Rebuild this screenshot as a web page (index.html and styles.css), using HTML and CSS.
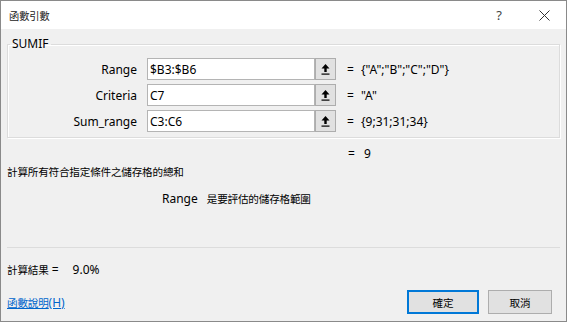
FILE: index.html
```html
<!DOCTYPE html>
<html lang="zh-Hant">
<head>
  <meta charset="UTF-8" />
  <title>函數引數</title>
  <link rel="stylesheet" href="styles.css">
</head>
<body>
  <div class="window">
    <div class="titlebar">
      <span class="title">函數引數</span>
      <span class="help">?</span>
      <svg class="close" width="11" height="11" viewBox="0 0 11 11">
        <path d="M0.5 0.5 L10.5 10.5 M10.5 0.5 L0.5 10.5" stroke="#333" stroke-width="1" fill="none"/>
      </svg>
    </div>

    <div class="content">
      <fieldset class="group">
        <legend>SUMIF</legend>
        <div class="args">
          <label>Range</label>
          <div class="field"><input type="text" value="$B3:$B6"><button class="pick"><svg width="9" height="11" viewBox="0 0 9 11"><path d="M4.5 0 L0.5 4.5 L3.3 4.5 L3.3 8 L5.7 8 L5.7 4.5 L8.5 4.5 Z" fill="#000"/><rect x="0.5" y="9.5" width="8" height="1.2" fill="#000"/></svg></button></div>
          <span class="eq">=</span>
          <span class="val">{"A";"B";"C";"D"}</span>

          <label>Criteria</label>
          <div class="field"><input type="text" value="C7"><button class="pick"><svg width="9" height="11" viewBox="0 0 9 11"><path d="M4.5 0 L0.5 4.5 L3.3 4.5 L3.3 8 L5.7 8 L5.7 4.5 L8.5 4.5 Z" fill="#000"/><rect x="0.5" y="9.5" width="8" height="1.2" fill="#000"/></svg></button></div>
          <span class="eq">=</span>
          <span class="val">"A"</span>

          <label>Sum_range</label>
          <div class="field"><input type="text" value="C3:C6"><button class="pick"><svg width="9" height="11" viewBox="0 0 9 11"><path d="M4.5 0 L0.5 4.5 L3.3 4.5 L3.3 8 L5.7 8 L5.7 4.5 L8.5 4.5 Z" fill="#000"/><rect x="0.5" y="9.5" width="8" height="1.2" fill="#000"/></svg></button></div>
          <span class="eq">=</span>
          <span class="val">{9;31;31;34}</span>
        </div>
      </fieldset>

      <div class="total"><span class="eq-sign">=</span>9</div>
      <div class="desc zh">計算所有符合指定條件之儲存格的總和</div>
      <div class="argdesc"><span class="argname">Range</span><span class="zh">是要評估的儲存格範圍</span></div>

      <div class="sep"></div>

      <div class="calc"><span class="zh">計算結果</span> =<span class="calc-val">9.0%</span></div>

      <div class="footer">
        <a href="#" class="helplink"><span class="zh">函數說明</span>(H)</a>
        <div class="buttons">
          <button class="btn default"><span class="zh">確定</span></button>
          <button class="btn cancel"><span class="zh">取消</span></button>
        </div>
      </div>
    </div>
  </div>
</body>
</html>
```

FILE: styles.css
```css
body {
  margin: 0;
  font-family: "Noto Sans", "Noto Sans CJK TC", sans-serif;
  font-size: 12px;
  color: #000;
}
.zh {
  font-family: "Noto Sans CJK TC", sans-serif;
  font-size: 10.6px;
  letter-spacing: -0.2px;
}
.window {
  box-sizing: border-box;
  width: 567px;
  height: 322px;
  border: 1px solid #8a8a8a;
  background: #f0f0f0;
  display: flex;
  flex-direction: column;
}
.titlebar {
  height: 28px;
  background: #fff;
  display: flex;
  align-items: center;
  padding-left: 8px;
}
.title {
  flex: 1;
  font-family: "Noto Sans CJK TC", sans-serif;
  font-size: 10.2px;
  color: #222;
}
.help {
  font-size: 13px;
  color: #444;
  margin-right: 37px;
}
.close {
  margin-right: 16px;
}
.content {
  padding: 0 6px;
  flex: 1;
  display: flex;
  flex-direction: column;
}
.group {
  margin: 7px 0 0 0;
  padding: 6px 0 5px 0;
  border: 1px solid #dcdcdc;
  box-shadow: inset 1px 1px 0 #fff, 1px 1px 0 #fff;
}
.group legend {
  margin-left: 2px;
  padding: 0 2px;
  line-height: 16px;
  font-size: 12px;
}
.args {
  display: grid;
  grid-template-columns: 139px 189px 22px 1fr;
  grid-auto-rows: 22px;
  row-gap: 4px;
  align-items: center;
}
.args label {
  text-align: right;
  padding-right: 10px;
}
.field {
  display: flex;
  height: 22px;
}
.field input {
  box-sizing: border-box;
  width: 168px;
  height: 22px;
  margin: 0;
  border: 1px solid #b4b4b4;
  background: #fff;
  font-family: inherit;
  font-size: 12px;
  padding: 0 2px;
  color: #000;
}
.pick {
  box-sizing: border-box;
  width: 21px;
  height: 22px;
  margin: 0;
  padding: 0;
  border: 1px solid #adadad;
  background: #e1e1e1;
  display: flex;
  align-items: center;
  justify-content: center;
}
.eq {
  padding-left: 11px;
}
.val {
  white-space: nowrap;
  padding-left: 3px;
}
.total {
  margin-top: 8px;
  line-height: 16px;
  padding-left: 341px;
}
.eq-sign {
  margin-right: 9px;
}
.desc {
  margin-top: 2px;
  line-height: 16px;
}
.argdesc {
  margin-top: 11px;
  line-height: 16px;
  padding-left: 155px;
}
.argname {
  margin-right: 9px;
}
.sep {
  margin-top: 40px;
  height: 1px;
  background: #dcdcdc;
}
.calc {
  margin-top: 14px;
  line-height: 16px;
}
.calc-val {
  margin-left: 14px;
}
.footer {
  margin-top: 12px;
  display: flex;
  align-items: center;
  justify-content: space-between;
  padding-right: 8px;
}
.helplink {
  color: #0066cc;
  text-decoration: underline;
}
.buttons {
  display: flex;
  gap: 9px;
}
.btn {
  box-sizing: border-box;
  width: 72px;
  height: 24px;
  margin: 0;
  border: 1px solid #adadad;
  background: #e1e1e1;
  font-family: inherit;
  font-size: 12px;
  color: #000;
}
.btn.default {
  border: 2px solid #0078d7;
}
.btn.cancel {
  width: 64px;
}
```
